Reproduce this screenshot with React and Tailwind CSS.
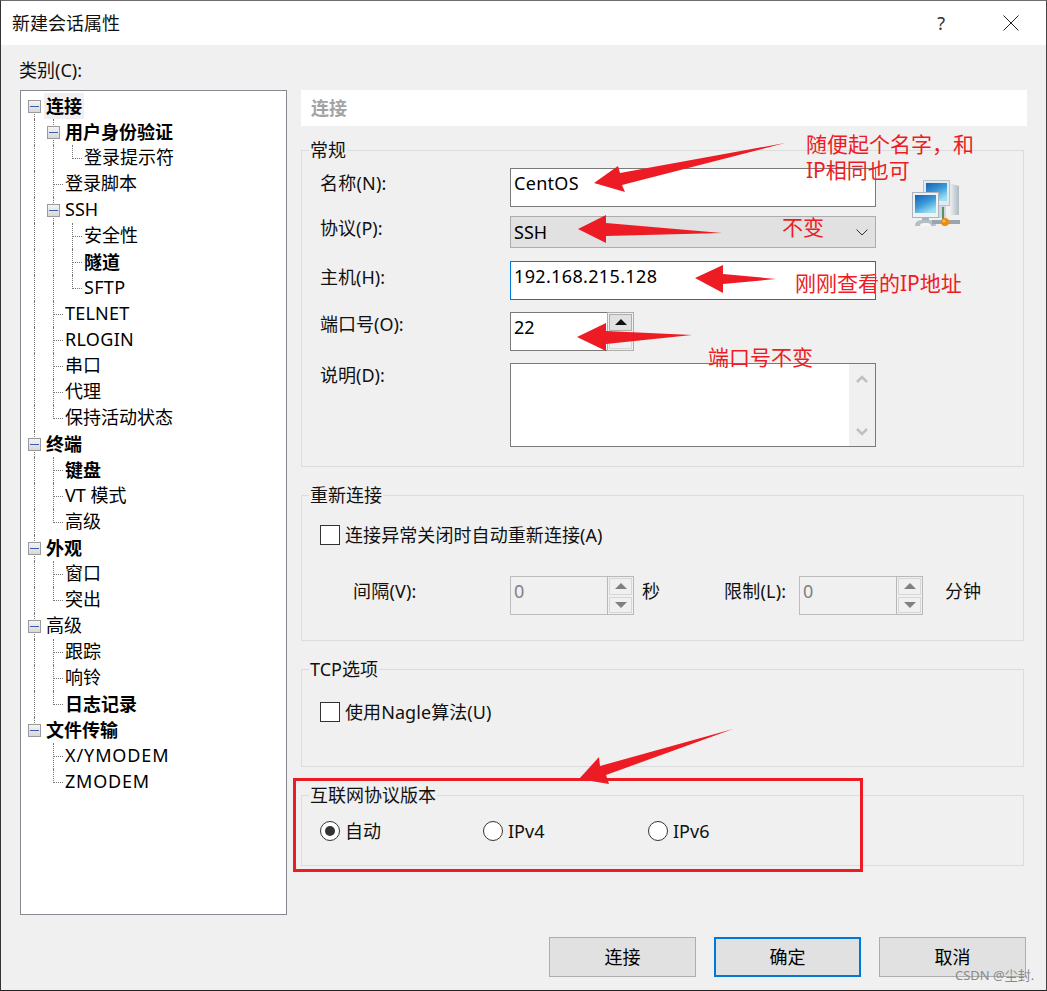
import React from 'react';

const treeRows = [
  { guides: ['first'], label: '连接', bold: true, selected: true },
  { guides: ['v', 'box'], label: '用户身份验证', bold: true },
  { guides: ['v', 'v', 'l'], label: '登录提示符' },
  { guides: ['v', 't'], label: '登录脚本' },
  { guides: ['v', 'box'], label: 'SSH' },
  { guides: ['v', 'v', 't'], label: '安全性' },
  { guides: ['v', 'v', 't'], label: '隧道', bold: true },
  { guides: ['v', 'v', 'l'], label: 'SFTP', track: 'tracking-[0.3px]' },
  { guides: ['v', 't'], label: 'TELNET', track: 'tracking-[0.2px]' },
  { guides: ['v', 't'], label: 'RLOGIN', track: 'tracking-[0.3px]' },
  { guides: ['v', 't'], label: '串口' },
  { guides: ['v', 't'], label: '代理' },
  { guides: ['v', 'l'], label: '保持活动状态' },
  { guides: ['box'], label: '终端', bold: true },
  { guides: ['v', 't'], label: '键盘', bold: true },
  { guides: ['v', 't'], label: 'VT 模式' },
  { guides: ['v', 'l'], label: '高级' },
  { guides: ['box'], label: '外观', bold: true },
  { guides: ['v', 't'], label: '窗口' },
  { guides: ['v', 'l'], label: '突出' },
  { guides: ['box'], label: '高级' },
  { guides: ['v', 't'], label: '跟踪' },
  { guides: ['v', 't'], label: '响铃' },
  { guides: ['v', 'l'], label: '日志记录', bold: true },
  { guides: ['last'], label: '文件传输', bold: true },
  { guides: ['none', 't'], label: 'X/YMODEM', track: 'tracking-[0.9px]' },
  { guides: ['none', 'l'], label: 'ZMODEM', track: 'tracking-[0.8px]' },
];

// one 19px column of the tree: dotted connector and/or the [-] box
function TreeCell({ kind, isEnd }) {
  const isBox = kind === 'box' || kind === 'first' || kind === 'last';
  return (
    <div className={`relative h-[26px] shrink-0 ${isEnd ? 'w-[18px]' : 'w-[19px]'}`}>
      {(kind === 'v' || kind === 't' || kind === 'box') && (
        <div className="absolute left-[6px] top-0 h-[26px] border-l border-dotted border-[#777]" />
      )}
      {kind === 'l' && <div className="absolute left-[6px] top-0 h-[14px] border-l border-dotted border-[#777]" />}
      {kind === 'last' && <div className="absolute left-[6px] top-0 h-[8px] border-l border-dotted border-[#777]" />}
      {kind === 'first' && <div className="absolute left-[6px] top-[14px] h-[12px] border-l border-dotted border-[#777]" />}
      {(kind === 't' || kind === 'l') && (
        <div className="absolute left-[7px] top-[13px] w-[9px] border-t border-dotted border-[#777]" />
      )}
      {isBox && (
        <div className="absolute left-0 top-[7px] flex h-[13px] w-[13px] items-center justify-center border border-[#9a9a9a] bg-gradient-to-b from-[#f4f4f4] to-[#d8d8d8]">
          <div className="h-px w-[9px] bg-[#3d5cb4]" />
        </div>
      )}
    </div>
  );
}

function TreeRow({ row }) {
  return (
    <div className="flex h-[26px] items-center leading-[26px]">
      {row.guides.map((g, i) => (
        <TreeCell key={i} kind={g} isEnd={i === row.guides.length - 1} />
      ))}
      <span className={`${row.bold ? 'font-bold' : 'pb-[2px]'} ${row.selected ? '-ml-[2px] bg-[#f0f0f0] px-[2px]' : ''} ${row.track || ''} whitespace-pre text-black`}>
        {row.label}
      </span>
    </div>
  );
}

function Group({ title, height, children }) {
  return (
    <div className={`relative w-[723px] border border-[#dcdcdc] ${height}`}>
      <span className="absolute -top-[14px] left-[7px] bg-[#f0f0f0] px-px leading-[26px] text-[#111]">{title}</span>
      {children}
    </div>
  );
}

function Triangle({ up, color }) {
  return (
    <svg width="12" height="6" viewBox="0 0 12 6">
      <polygon points={up ? '6,0 12,6 0,6' : '0,0 12,0 6,6'} fill={color} />
    </svg>
  );
}

function Spinner({ value, width, disabled }) {
  const btn = disabled ? 'border-[#d6d6d6] bg-[#f0f0f0]' : 'border-[#adadad] bg-[#e1e1e1]';
  return (
    <div className={`flex h-[39px] ${width}`}>
      <div className={`flex flex-1 items-start border-y border-l pl-[3px] pt-px leading-[26px] ${disabled ? 'border-[#bdbdbd] bg-[#f0f0f0] text-[#808080]' : 'border-[#7a7a7a] bg-white text-black'}`}>
        {value}
      </div>
      <div className={`flex w-[27px] flex-col gap-[2px] border p-px ${disabled ? 'border-[#b8b8b8]' : 'border-[#adadad]'}`}>
        <div className={`flex flex-1 items-center justify-center border ${btn}`}>
          <Triangle up color={disabled ? '#808080' : '#111'} />
        </div>
        <div className="flex flex-1 items-center justify-center border border-[#d6d6d6] bg-[#f0f0f0]">
          {disabled && <Triangle color="#808080" />}
        </div>
      </div>
    </div>
  );
}

function Checkbox({ label }) {
  return (
    <div className="flex h-[26px] items-center leading-[26px]">
      <div className="h-[20px] w-[20px] border border-[#333] bg-white" />
      <span className="ml-[5px] tracking-[0.08px] text-[#111]">{label}</span>
    </div>
  );
}

function Radio({ label, checked, width }) {
  return (
    <div className={`flex h-[26px] items-center leading-[26px] ${width}`}>
      <div className="flex h-[20px] w-[20px] items-center justify-center rounded-full border border-[#333] bg-white">
        {checked && <div className="h-[10px] w-[10px] rounded-full bg-[#333]" />}
      </div>
      <span className="ml-[5px] text-[#111]">{label}</span>
    </div>
  );
}

function FormRow({ label, labelPad, children }) {
  return (
    <div className="flex">
      <div className={`w-[190px] leading-[26px] text-[#111] ${labelPad}`}>{label}</div>
      {children}
    </div>
  );
}

function FooterButton({ label, primary }) {
  return (
    <button className={`flex h-[40px] w-[147px] items-center justify-center bg-[#e1e1e1] leading-[26px] text-black ${primary ? 'border-2 border-[#0078d7]' : 'border border-[#adadad]'}`}>
      {label}
    </button>
  );
}

function ComputersIcon() {
  return (
    <svg width="48" height="48" viewBox="0 0 48 48" className="shrink-0">
      <defs>
        <linearGradient id="scr" x1="0" y1="0" x2="0.6" y2="1">
          <stop offset="0" stopColor="#1262b4" />
          <stop offset="0.55" stopColor="#3f9ad8" />
          <stop offset="1" stopColor="#9adff2" />
        </linearGradient>
        <linearGradient id="tower" x1="0" y1="0" x2="1" y2="0">
          <stop offset="0" stopColor="#f2f5f7" />
          <stop offset="1" stopColor="#aeb9c1" />
        </linearGradient>
      </defs>
      <path d="M37 3 L47 6 L47 35 L37 35 Z" fill="url(#tower)" />
      <rect x="11.5" y="0.5" width="26" height="25" fill="#e3e9ee" stroke="#b9c3ca" />
      <rect x="14" y="3" width="21" height="18" fill="url(#scr)" />
      <rect x="26" y="26" width="8" height="12" fill="#cfd7dd" />
      <rect x="30" y="27" width="2" height="14" fill="#5e8f6a" />
      <rect x="0.5" y="12.5" width="26" height="25" fill="#eef2f5" stroke="#aab5bd" />
      <rect x="3" y="15" width="21" height="18" fill="url(#scr)" />
      <rect x="10" y="37" width="7" height="4" fill="#a9b3bb" />
      <path d="M3 46 Q3 40 10 40 L17 40 Q24 40 24 46 Z" fill="#b4bec6" />
      <path d="M8 46 Q8 43 12 43 L15 43 Q19 43 19 46 Z" fill="#f4f6f8" />
      <rect x="20" y="40" width="28" height="4" fill="#98a5ad" />
      <circle cx="33" cy="42" r="4" fill="#ee8a0c" />
      <circle cx="32" cy="41" r="1.5" fill="#f9c04a" />
    </svg>
  );
}

const arrows = [
  '785,143 620,173 618,166 594,183 625,192 622,185',
  '578,229 606,215 606,223 722,233 606,236 606,243',
  '695,278 723,265 723,274 776,279 723,284 723,293',
  '577,337 606,323 606,331 692,335 606,344 606,351',
  '733,729 600,766 599,757 579,779 609,784 606,775',
];

const notes = [
  { text: '随便起个名字，和', cls: 'left-[806px] top-[130px]' },
  { text: 'IP相同也可', cls: 'left-[806px] top-[156px]' },
  { text: '不变', cls: 'left-[782px] top-[213px]' },
  { text: '刚刚查看的IP地址', cls: 'left-[795px] top-[269px]' },
  { text: '端口号不变', cls: 'left-[708px] top-[343px]' },
];

export default function App() {
  return (
    <div className="relative h-[991px] w-[1047px] overflow-hidden font-['Noto_Sans','Noto_Sans_CJK_SC',sans-serif] text-[18px]">
      <div className="flex h-full flex-col border border-t-[#6e6e6e] border-r-[#444] border-b-[#222] border-l-[#333] bg-[#f0f0f0]">
        {/* Title bar */}
        <div className="flex h-[44px] shrink-0 items-center bg-white pl-[11px] pr-[27px]">
          <span className="leading-[26px] text-[#111]">新建会话属性</span>
          <span className="ml-auto text-[#333]">?</span>
          <svg width="16" height="16" viewBox="0 0 16 16" className="ml-[58px]">
            <path d="M0.5 0.5 L15.5 15.5 M15.5 0.5 L0.5 15.5" stroke="#222" strokeWidth="1" fill="none" />
          </svg>
        </div>

        <div className="flex pl-[19px]">
          {/* Category tree */}
          <div className="w-[267px] shrink-0 pt-[12px]">
            <div className="-ml-px leading-[26px] text-[#111]">类别(C):</div>
            <div className="mt-[7px] h-[825px] border border-[#848a90] bg-white pl-[7px] pt-[2px]">
              {treeRows.map((row, i) => (
                <TreeRow key={i} row={row} />
              ))}
            </div>
          </div>

          {/* Settings */}
          <div className="ml-[14px] pt-[45px]">
            <div className="flex h-[36px] w-[726px] items-center bg-white pl-[10px] font-bold leading-[26px] text-[#a3a3a3]">连接</div>

            <div className="mt-[24px] flex flex-col gap-[28px]">
              <Group title="常规" height="h-[317px]">
                <div className="flex pl-[18px] pt-[17px]">
                  <div className="flex w-[556px] flex-col">
                    <FormRow label="名称(N):" labelPad="pt-[2px] tracking-[0.2px]">
                      <div className="h-[39px] w-[366px] border border-[#7a7a7a] bg-white pl-[3px] pt-px leading-[26px] tracking-[0.3px] text-black">CentOS</div>
                    </FormRow>
                    <div className="mt-[9px]">
                      <FormRow label="协议(P):" labelPad="-mt-px">
                        <div className="flex h-[32px] w-[366px] items-center justify-between border border-[#adadad] bg-[#e1e1e1] pl-[3px] pr-[7px] leading-[26px] text-black">
                          <span>SSH</span>
                          <svg width="12" height="7" viewBox="0 0 12 7">
                            <path d="M0.5 0.5 L6 6 L11.5 0.5" stroke="#333" strokeWidth="1" fill="none" />
                          </svg>
                        </div>
                      </FormRow>
                    </div>
                    <div className="mt-[13px]">
                      <FormRow label="主机(H):" labelPad="pt-[3px]">
                        <div className="h-[39px] w-[366px] border border-[#0078d7] bg-white pl-[3px] pt-px leading-[26px] tracking-[0.35px] text-black">192.168.215.128</div>
                      </FormRow>
                    </div>
                    <div className="mt-[12px]">
                      <FormRow label="端口号(O):" labelPad="-mt-px">
                        <Spinner value="22" width="w-[124px]" />
                      </FormRow>
                    </div>
                    <div className="mt-[12px]">
                      <FormRow label="说明(D):" labelPad="-mt-px">
                        <div className="flex h-[84px] w-[366px] justify-end border border-[#7a7a7a] bg-white">
                          <div className="flex w-[26px] flex-col items-center justify-between bg-[#f0f0f0] pb-[10px] pt-[11px]">
                            <svg width="12" height="8" viewBox="0 0 12 8">
                              <path d="M1 7 L6 2 L11 7" stroke="#c0c0c0" strokeWidth="2.5" fill="none" />
                            </svg>
                            <svg width="12" height="8" viewBox="0 0 12 8">
                              <path d="M1 1 L6 6 L11 1" stroke="#c0c0c0" strokeWidth="2.5" fill="none" />
                            </svg>
                          </div>
                        </div>
                      </FormRow>
                    </div>
                  </div>
                  <div className="ml-[36px] pt-[12px]">
                    <ComputersIcon />
                  </div>
                </div>
              </Group>

              <Group title="重新连接" height="h-[146px]">
                <div className="pl-[18px] pt-[26px]">
                  <Checkbox label="连接异常关闭时自动重新连接(A)" />
                  <div className="mt-[28px] flex pl-[33px] leading-[26px] text-[#111]">
                    <div className="w-[157px] pt-[2px] tracking-[0.2px]">间隔(V):</div>
                    <Spinner value="0" width="w-[124px]" disabled />
                    <div className="ml-[8px] pt-[2px]">秒</div>
                    <div className="ml-[65px] w-[74px] -translate-x-px pt-[2px] tracking-[0.2px]">限制(L):</div>
                    <Spinner value="0" width="w-[124px]" disabled />
                    <div className="ml-[22px] pt-[2px]">分钟</div>
                  </div>
                </div>
              </Group>

              <Group title="TCP选项" height="h-[98px]">
                <div className="pl-[18px] pt-[29px]">
                  <Checkbox label="使用Nagle算法(U)" />
                </div>
              </Group>

              <Group title="互联网协议版本" height="h-[71px]">
                <div className="flex pl-[18px] pt-[22px]">
                  <Radio label="自动" checked width="w-[163px]" />
                  <Radio label="IPv4" width="w-[165px]" />
                  <Radio label="IPv6" width="w-[100px]" />
                </div>
              </Group>
            </div>
          </div>
        </div>

        {/* Dialog buttons */}
        <div className="mt-[22px] flex justify-end gap-[18px] pr-[20px]">
          <FooterButton label="连接" />
          <FooterButton label="确定" primary />
          <FooterButton label="取消" />
        </div>
      </div>

      {/* Red annotations drawn on top of the dialog */}
      <svg width="1047" height="991" viewBox="0 0 1047 991" className="pointer-events-none absolute left-0 top-0">
        {arrows.map((pts, i) => (
          <polygon key={i} points={pts} fill="#ed1c24" />
        ))}
        <rect x="294.5" y="779.5" width="567" height="91" fill="none" stroke="#ed1c24" strokeWidth="3" />
      </svg>
      {notes.map((n) => (
        <span key={n.text} className={`absolute whitespace-nowrap text-[21px] leading-[28px] text-[#ed1c24] ${n.cls}`}>
          {n.text}
        </span>
      ))}
      <span className="absolute left-[955px] top-[966px] whitespace-nowrap text-[13px] leading-[18px] text-[#8a8a8a]">CSDN @尘封.</span>
    </div>
  );
}
